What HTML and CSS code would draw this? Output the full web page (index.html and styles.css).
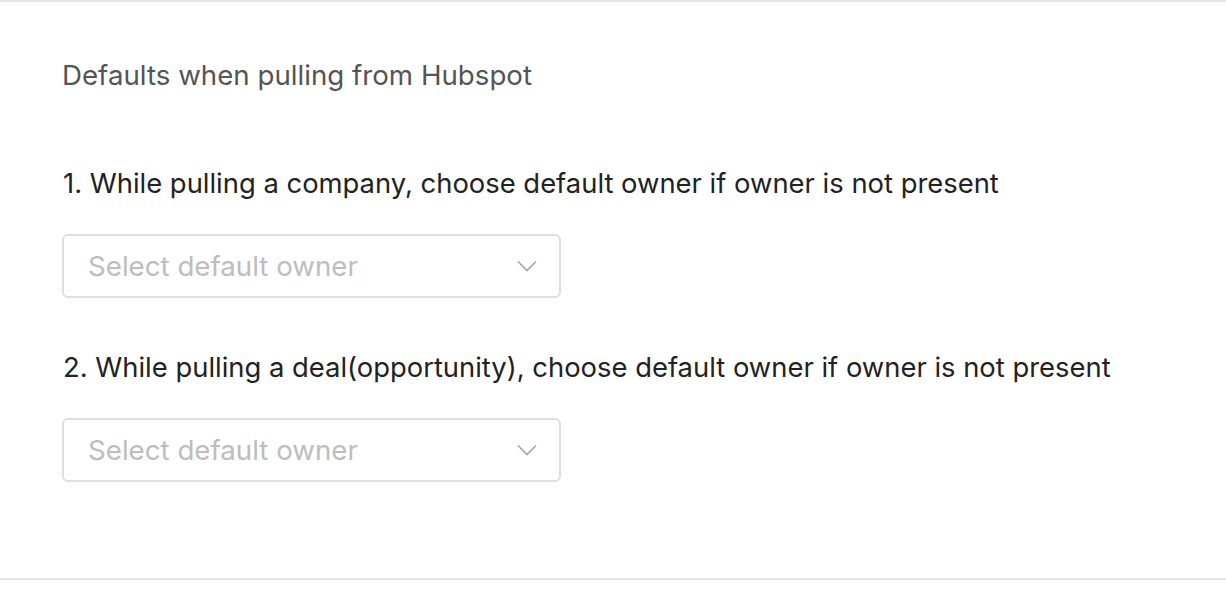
FILE: index.html
```html
<!DOCTYPE html>
<html>
<head>
<meta charset="utf-8">
<link rel="stylesheet" href="styles.css">
</head>
<body>
<section class="panel">
  <h2 class="title">Defaults when pulling from Hubspot</h2>
  <div class="item">
    <p class="label">1. While pulling a company, choose default owner if owner is not present</p>
    <div class="select">
      <span class="placeholder">Select default owner</span>
      <svg class="chev" width="20" height="12" viewBox="0 0 20 12"><path d="M1 1.5 L10 10.5 L19 1.5" fill="none" stroke="#a8a8a8" stroke-width="1.7"/></svg>
    </div>
  </div>
  <div class="item">
    <p class="label">2. While pulling a deal(opportunity), choose default owner if owner is not present</p>
    <div class="select">
      <span class="placeholder">Select default owner</span>
      <svg class="chev" width="20" height="12" viewBox="0 0 20 12"><path d="M1 1.5 L10 10.5 L19 1.5" fill="none" stroke="#a8a8a8" stroke-width="1.7"/></svg>
    </div>
  </div>
</section>
</body>
</html>
```
FILE: styles.css
```css
html, body { margin: 0; padding: 0; background: #fff; }
body {
  font-family: Inter, "Noto Sans", sans-serif;
}
.panel {
  border-top: 2px solid #e6e6e6;
  border-bottom: 2px solid #e6e6e6;
  height: 576px;
  padding: 0 62px;
  box-sizing: content-box;
}
.title {
  margin: 0;
  padding-top: 58px;
  font-size: 27.7px;
  font-weight: 400;
  line-height: 30px;
  color: #555;
}
.item { margin-top: 78px; }
.item + .item { margin-top: 54px; }
.label {
  margin: 0 0 0 1px;
  font-size: 27.4px;
  line-height: 30px;
  color: #222;
}
.select {
  margin-top: 36px;
  height: 60px;
  width: 449px;
  border: 2px solid #dedede;
  border-radius: 6px;
  display: flex;
  align-items: center;
  justify-content: space-between;
  padding: 0 22px 0 24px;
  box-sizing: content-box;
}
.placeholder { font-size: 27.7px; color: #bdbdbd; }
.chev { display: block; }
```
